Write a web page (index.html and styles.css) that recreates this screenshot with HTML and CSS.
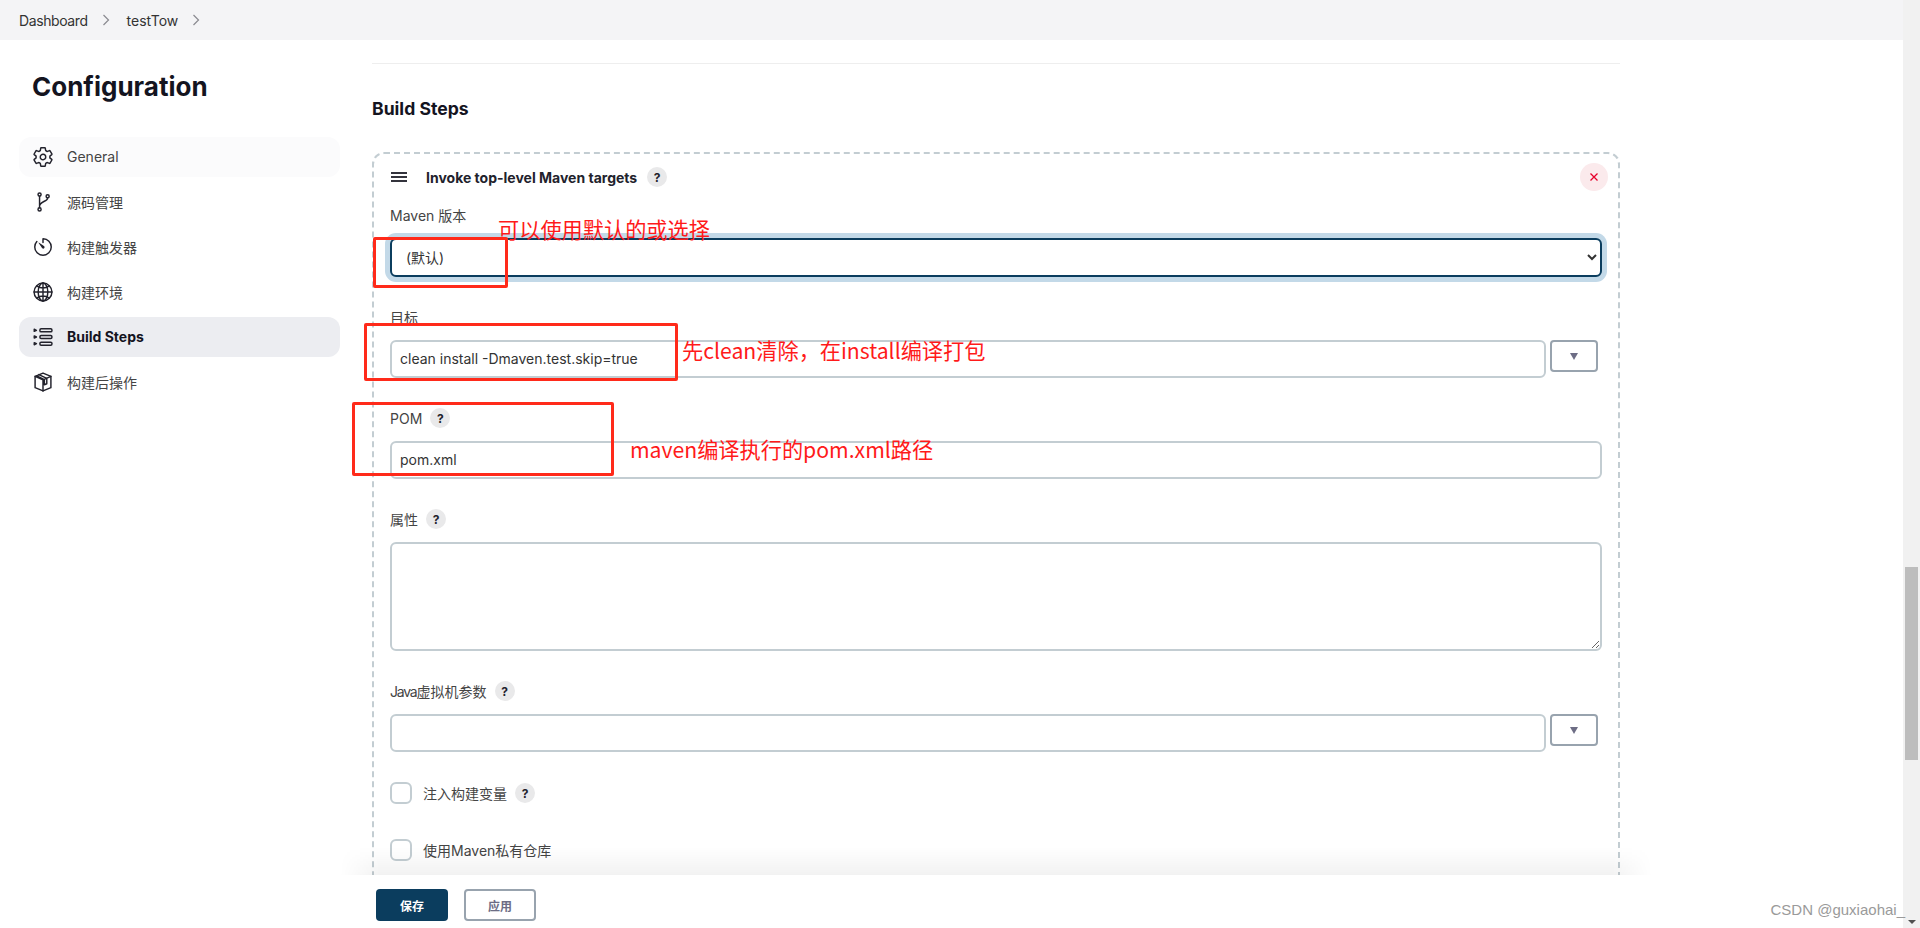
FILE: index.html
```html
<!DOCTYPE html>
<html lang="zh">
<head>
<meta charset="utf-8">
<title>testTow Configuration</title>
<link rel="stylesheet" href="styles.css">
</head>
<body>
<div class="app">
  <div class="page">
    <nav class="crumbs">
      <a class="tight">Dashboard</a>
      <svg class="crumb-sep" viewBox="0 0 10 12"><path d="M2.5 1 7.500 6l-5 5"/></svg>
      <a>testTow</a>
      <svg class="crumb-sep" viewBox="0 0 10 12"><path d="M2.5 1 7.500 6l-5 5"/></svg>
    </nav>
    <div class="content">
      <aside class="sidebar">
        <h1 class="title">Configuration</h1>
        <ul class="menu">
          <li class="item hover">
            <svg class="ico" viewBox="0 0 512 512"><path d="M262.29 192.31a64 64 0 1057.4 57.4 64.13 64.13 0 00-57.4-57.4zM416.39 256a154.34 154.34 0 01-1.53 20.79l45.21 35.46a10.81 10.81 0 012.45 13.75l-42.77 74a10.81 10.81 0 01-13.14 4.59l-44.9-18.08a16.11 16.11 0 00-15.17 1.75A164.48 164.48 0 01325 400.8a15.94 15.94 0 00-8.82 12.14l-6.73 47.89a11.08 11.08 0 01-10.68 9.17h-85.54a11.11 11.11 0 01-10.69-8.87l-6.72-47.82a16.07 16.07 0 00-9-12.22 155.3 155.3 0 01-21.46-12.57 16 16 0 00-15.11-1.71l-44.89 18.07a10.81 10.81 0 01-13.14-4.58l-42.77-74a10.8 10.8 0 012.45-13.75l38.21-30a16.05 16.05 0 006-14.08c-.36-4.17-.58-8.33-.58-12.5s.21-8.27.58-12.35a16 16 0 00-6.07-13.94l-38.19-30A10.81 10.81 0 0149.48 186l42.77-74a10.81 10.81 0 0113.14-4.59l44.9 18.08a16.11 16.11 0 0015.17-1.75A164.48 164.48 0 01187 111.2a15.94 15.94 0 008.82-12.14l6.73-47.89A11.08 11.08 0 01213.23 42h85.54a11.11 11.11 0 0110.69 8.87l6.72 47.82a16.07 16.07 0 009 12.22 155.3 155.3 0 0121.46 12.57 16 16 0 0015.11 1.71l44.89-18.07a10.81 10.81 0 0113.14 4.58l42.77 74a10.8 10.8 0 01-2.45 13.75l-38.21 30a16.05 16.05 0 00-6.05 14.08c.33 4.14.55 8.3.55 12.47z"/></svg>
            <span>General</span>
          </li>
          <li class="item">
            <svg class="ico" viewBox="0 0 512 512"><circle cx="176" cy="84" r="36"/><circle cx="176" cy="428" r="36"/><circle cx="364" cy="124" r="36"/><path d="M176 120v272M364 160c0 90-188 80-188 190"/></svg>
            <span>源码管理</span>
          </li>
          <li class="item">
            <svg class="ico" viewBox="0 0 512 512"><path d="M112.91 128A191.85 191.85 0 0064 254c-1.18 106.35 85.65 193.8 192 194 106.2.2 192-85.83 192-192 0-104.54-83.55-189.61-187.5-192a4.36 4.36 0 00-4.5 4.37V152"/><path class="fill" d="M233.38 278.63l-79-113a8.13 8.13 0 0111.32-11.32l113 79a32.5 32.5 0 01-37.25 53.26 33.21 33.21 0 01-8.07-7.94z"/></svg>
            <span>构建触发器</span>
          </li>
          <li class="item">
            <svg class="ico" viewBox="0 0 512 512"><path d="M256 48C141.13 48 48 141.13 48 256s93.13 208 208 208 208-93.13 208-208S370.87 48 256 48z"/><path d="M256 48c-58.07 0-112.67 93.13-112.670 208S197.93 464 256 464s112.67-93.13 112.67-208S314.07 48 256 48z"/><path d="M117.33 117.33c38.24 27.15 86.38 43.34 138.67 43.34s100.43-16.19 138.67-43.34M394.67 394.67c-38.24-27.15-86.38-43.34-138.67-43.34s-100.43 16.19-138.67 43.34M256 48v416M464 256H48"/></svg>
            <span>构建环境</span>
          </li>
          <li class="item active">
            <svg class="ico" viewBox="0 0 512 512"><rect x="184" y="64" width="280" height="72" rx="28"/><rect x="184" y="220" width="280" height="72" rx="28"/><rect x="184" y="376" width="280" height="72" rx="28"/><path d="M52 76l52 24-52 24zM52 232l52 24-52 24zM52 388l52 24-52 24z"/></svg>
            <span>Build Steps</span>
          </li>
          <li class="item">
            <svg class="ico" viewBox="0 0 512 512"><path d="M256 48 72 124v264l184 76 184-76V124z"/><path d="M72 124l184 84 184-84M256 208v256M160 84l184 88v124l-56 24V204L112 116"/></svg>
            <span>构建后操作</span>
          </li>
        </ul>
      </aside>
      <main class="main">
        <hr class="rule">
        <h2 class="section">Build Steps</h2>
        <section class="card">
          <header class="card-head">
            <span class="grip"><i></i><i></i><i></i></span>
            <strong class="card-title">Invoke top-level Maven targets</strong>
            <span class="help">?</span>
            <span class="close">
              <svg viewBox="0 0 10 10"><path d="M1.500 1.500l7 7M8.500 1.500l-7 7"/></svg>
            </span>
          </header>
          <div class="field first">
            <label class="label">Maven 版本</label>
            <select class="control select"><option>(默认)</option></select>
          </div>
          <div class="field">
            <label class="label">目标</label>
            <div class="combo">
              <input class="control text" value="clean install -Dmaven.test.skip=true">
              <button class="arrow"><i></i></button>
            </div>
          </div>
          <div class="field">
            <label class="label">POM <span class="help">?</span></label>
            <input class="control text" value="pom.xml">
          </div>
          <div class="field">
            <label class="label">属性 <span class="help">?</span></label>
            <textarea class="control area"></textarea>
          </div>
          <div class="field">
            <label class="label"><span class="tight-more">Java</span>虚拟机参数 <span class="help">?</span></label>
            <div class="combo">
              <input class="control text">
              <button class="arrow"><i></i></button>
            </div>
          </div>
          <div class="check first-check"><span class="box"></span><span>注入构建变量</span><span class="help">?</span></div>
          <div class="check"><span class="box"></span><span>使用Maven私有仓库</span></div>
        </section>
      </main>
    </div>
    <footer class="footer">
      <button class="btn primary">保存</button>
      <button class="btn secondary">应用</button>
    </footer>

    <div class="mark box-a"></div>
    <div class="mark box-b"></div>
    <div class="mark box-c"></div>
    <div class="note note-a">可以使用默认的或选择</div>
    <div class="note note-b">先clean清除，在install编译打包</div>
    <div class="note note-c">maven编译执行的pom.xml路径</div>
  </div>
  <div class="scrollbar">
    <div class="track"><div class="thumb"></div></div>
    <i class="down"></i>
  </div>
  <div class="watermark">CSDN @guxiaohai_</div>
</div>
</body>
</html>
```

FILE: styles.css
```css
* { box-sizing: border-box; }
html, body { margin: 0; height: 100%; overflow: hidden; background: #fff; }
body { font-family: Inter, "Noto Sans CJK SC", sans-serif; font-size: 14px; color: #333; }

.app { position: relative; display: flex; width: 1920px; height: 928px; overflow: hidden; }
.page { position: relative; flex: 1; min-width: 0; display: flex; flex-direction: column; overflow: hidden; }

.crumbs { flex: none; height: 40px; background: #f4f4f6; display: flex; align-items: center; padding-left: 19px; color: #333; font-size: 14px; }
.tight { letter-spacing: -.4px; }
.tight-more { letter-spacing: -1.200px; }
.crumb-sep { width: 10px; height: 12px; margin: 0 16px 0 13px; fill: none; stroke: #8a8a90; stroke-width: 1.200; }

.content { flex: 1; display: flex; gap: 32px; padding-left: 19px; min-height: 0; }

.sidebar { flex: none; width: 321px; }
.title { margin: 28px 0 0 13px; font-size: 26px; line-height: 38px; font-weight: 700; color: #14141f; }
.menu { list-style: none; margin: 31px 0 0; padding: 0; display: flex; flex-direction: column; gap: 5px; }
.item { height: 40px; border-radius: 12px; display: flex; align-items: center; gap: 13px; padding: 0 0 1px 13px; color: #444; }
.item.hover { background: #fbfbfc; }
.item.active { background: #ecedf1; color: #14141f; font-weight: 700; }
.ico { width: 22px; height: 22px; flex: none; fill: none; stroke: #22222c; stroke-width: 34; stroke-linecap: round; stroke-linejoin: round; }
.ico .fill { fill: #22222c; stroke: none; }

.main { flex: none; width: 1248px; }
.rule { margin: 23px 0 0; border: 0; border-top: 1px solid #eeeeee; }
.section { margin: 33px 0 0; font-size: 17.600px; line-height: 24px; font-weight: 700; color: #14141f; }
.card { margin-top: 31px; border: 2px dashed #c3cdd2; border-radius: 12px; padding: 0 16px 40px; height: 900px; }

.card-head { position: relative; height: 46px; display: flex; align-items: center; padding-left: 1px; }
.grip { width: 16px; display: flex; flex-direction: column; gap: 2.500px; margin-right: 19px; }
.grip i { display: block; height: 1.500px; background: #33333c; }
.card-title { font-size: 14px; font-weight: 700; color: #22222c; margin-right: 10px; }
.help { display: inline-flex; width: 20px; height: 20px; border-radius: 50%; background: #e9e9ea; color: #22222c; font-size: 12px; font-weight: 700; align-items: center; justify-content: center; }
.label .help { margin-left: 8px; }
.close { margin-left: auto; margin-right: -6px; width: 28px; height: 28px; border-radius: 50%; background: #fbeaec; display: flex; align-items: center; justify-content: center; }
.close svg { width: 10px; height: 10px; fill: none; stroke: #e6002b; stroke-width: 1.300; }

.field { margin-top: 29px; }
.field.first { margin-top: 4px; }
.label { display: flex; align-items: center; height: 22px; margin-bottom: 12px; color: #444; font-size: 14px; }
.control { display: block; width: 100%; font: inherit; color: #333; background: #fff; border: 2px solid #c3cdd2; border-radius: 6px; outline: 0; }
.select { height: 39px; padding: 0 10px; border-color: #0b3d5e; box-shadow: 0 0 0 5px #c3d9e8; }
.text { height: 38px; padding: 0 8px 1px; }
.area { height: 109px; padding: 8px; resize: vertical; }
.combo { display: flex; gap: 4px; align-items: flex-start; }
.combo .text { flex: 1; min-width: 0; width: auto; }
.arrow { flex: none; width: 48px; height: 32px; margin-right: 4px; background: #fff; border: 2px solid #98a3ae; border-radius: 4px; display: flex; align-items: center; justify-content: center; padding: 0; }
.arrow i { display: block; border: 4.500px solid transparent; border-top: 7px solid #6d6d85; border-bottom: 0; }

.check { display: flex; align-items: center; gap: 11px; height: 22px; margin-top: 35px; color: #444; }
.check.first-check { margin-top: 30px; }
.check .help { margin-left: -3px; }
.box { width: 22px; height: 22px; border: 2px solid #c3cdd2; border-radius: 6px; background: #fff; }

.footer { position: absolute; left: 0; right: 0; bottom: 0; height: 53px; background: #fff; display: flex; align-items: center; gap: 16px; padding: 7px 0 0 376px; }
.footer::before { content: ""; position: absolute; left: 340px; top: -28px; width: 1312px; height: 28px; background: linear-gradient(rgba(0,0,0,0), rgba(0,0,0,.05)); -webkit-mask-image: linear-gradient(90deg, transparent, #000 40px, #000 1272px, transparent); mask-image: linear-gradient(90deg, transparent, #000 40px, #000 1272px, transparent); }
.btn { width: 72px; height: 32px; font: inherit; font-size: 12px; font-weight: 700; border-radius: 4px; padding: 0; }
.primary { background: #0b3d5e; border: 0; color: #fff; }
.secondary { background: #fff; border: 2px solid #98a3ae; color: #6d6d85; }

.mark { position: absolute; border: 3px solid #ff2a1a; border-radius: 2px; }
.box-a { left: 373px; top: 237px; width: 135px; height: 51px; }
.box-b { left: 364px; top: 323px; width: 314px; height: 58px; }
.box-c { left: 352px; top: 402px; width: 262px; height: 74px; }
.note { position: absolute; color: #ff1a1a; font-family: "Noto Sans CJK SC", "Open Sans", sans-serif; font-size: 21.200px; line-height: 28px; white-space: nowrap; }
.note-a { left: 498px; top: 215px; }
.note-b { left: 682px; top: 336px; }
.note-c { left: 630px; top: 435px; }
.watermark { position: absolute; right: 15px; top: 901px; font-family: "Liberation Sans", sans-serif; font-size: 15px; line-height: 18px; color: #9a9a9a; white-space: nowrap; }

.scrollbar { flex: none; width: 17px; height: 928px; background: #f1f1f1; display: flex; flex-direction: column; }
.track { flex: 1; padding: 567px 2px 0; }
.thumb { height: 193px; background: #bdbdbd; }
.down { flex: none; align-self: center; margin-bottom: 4px; border: 4px solid transparent; border-top: 4px solid #505050; border-bottom: 0; }
```
